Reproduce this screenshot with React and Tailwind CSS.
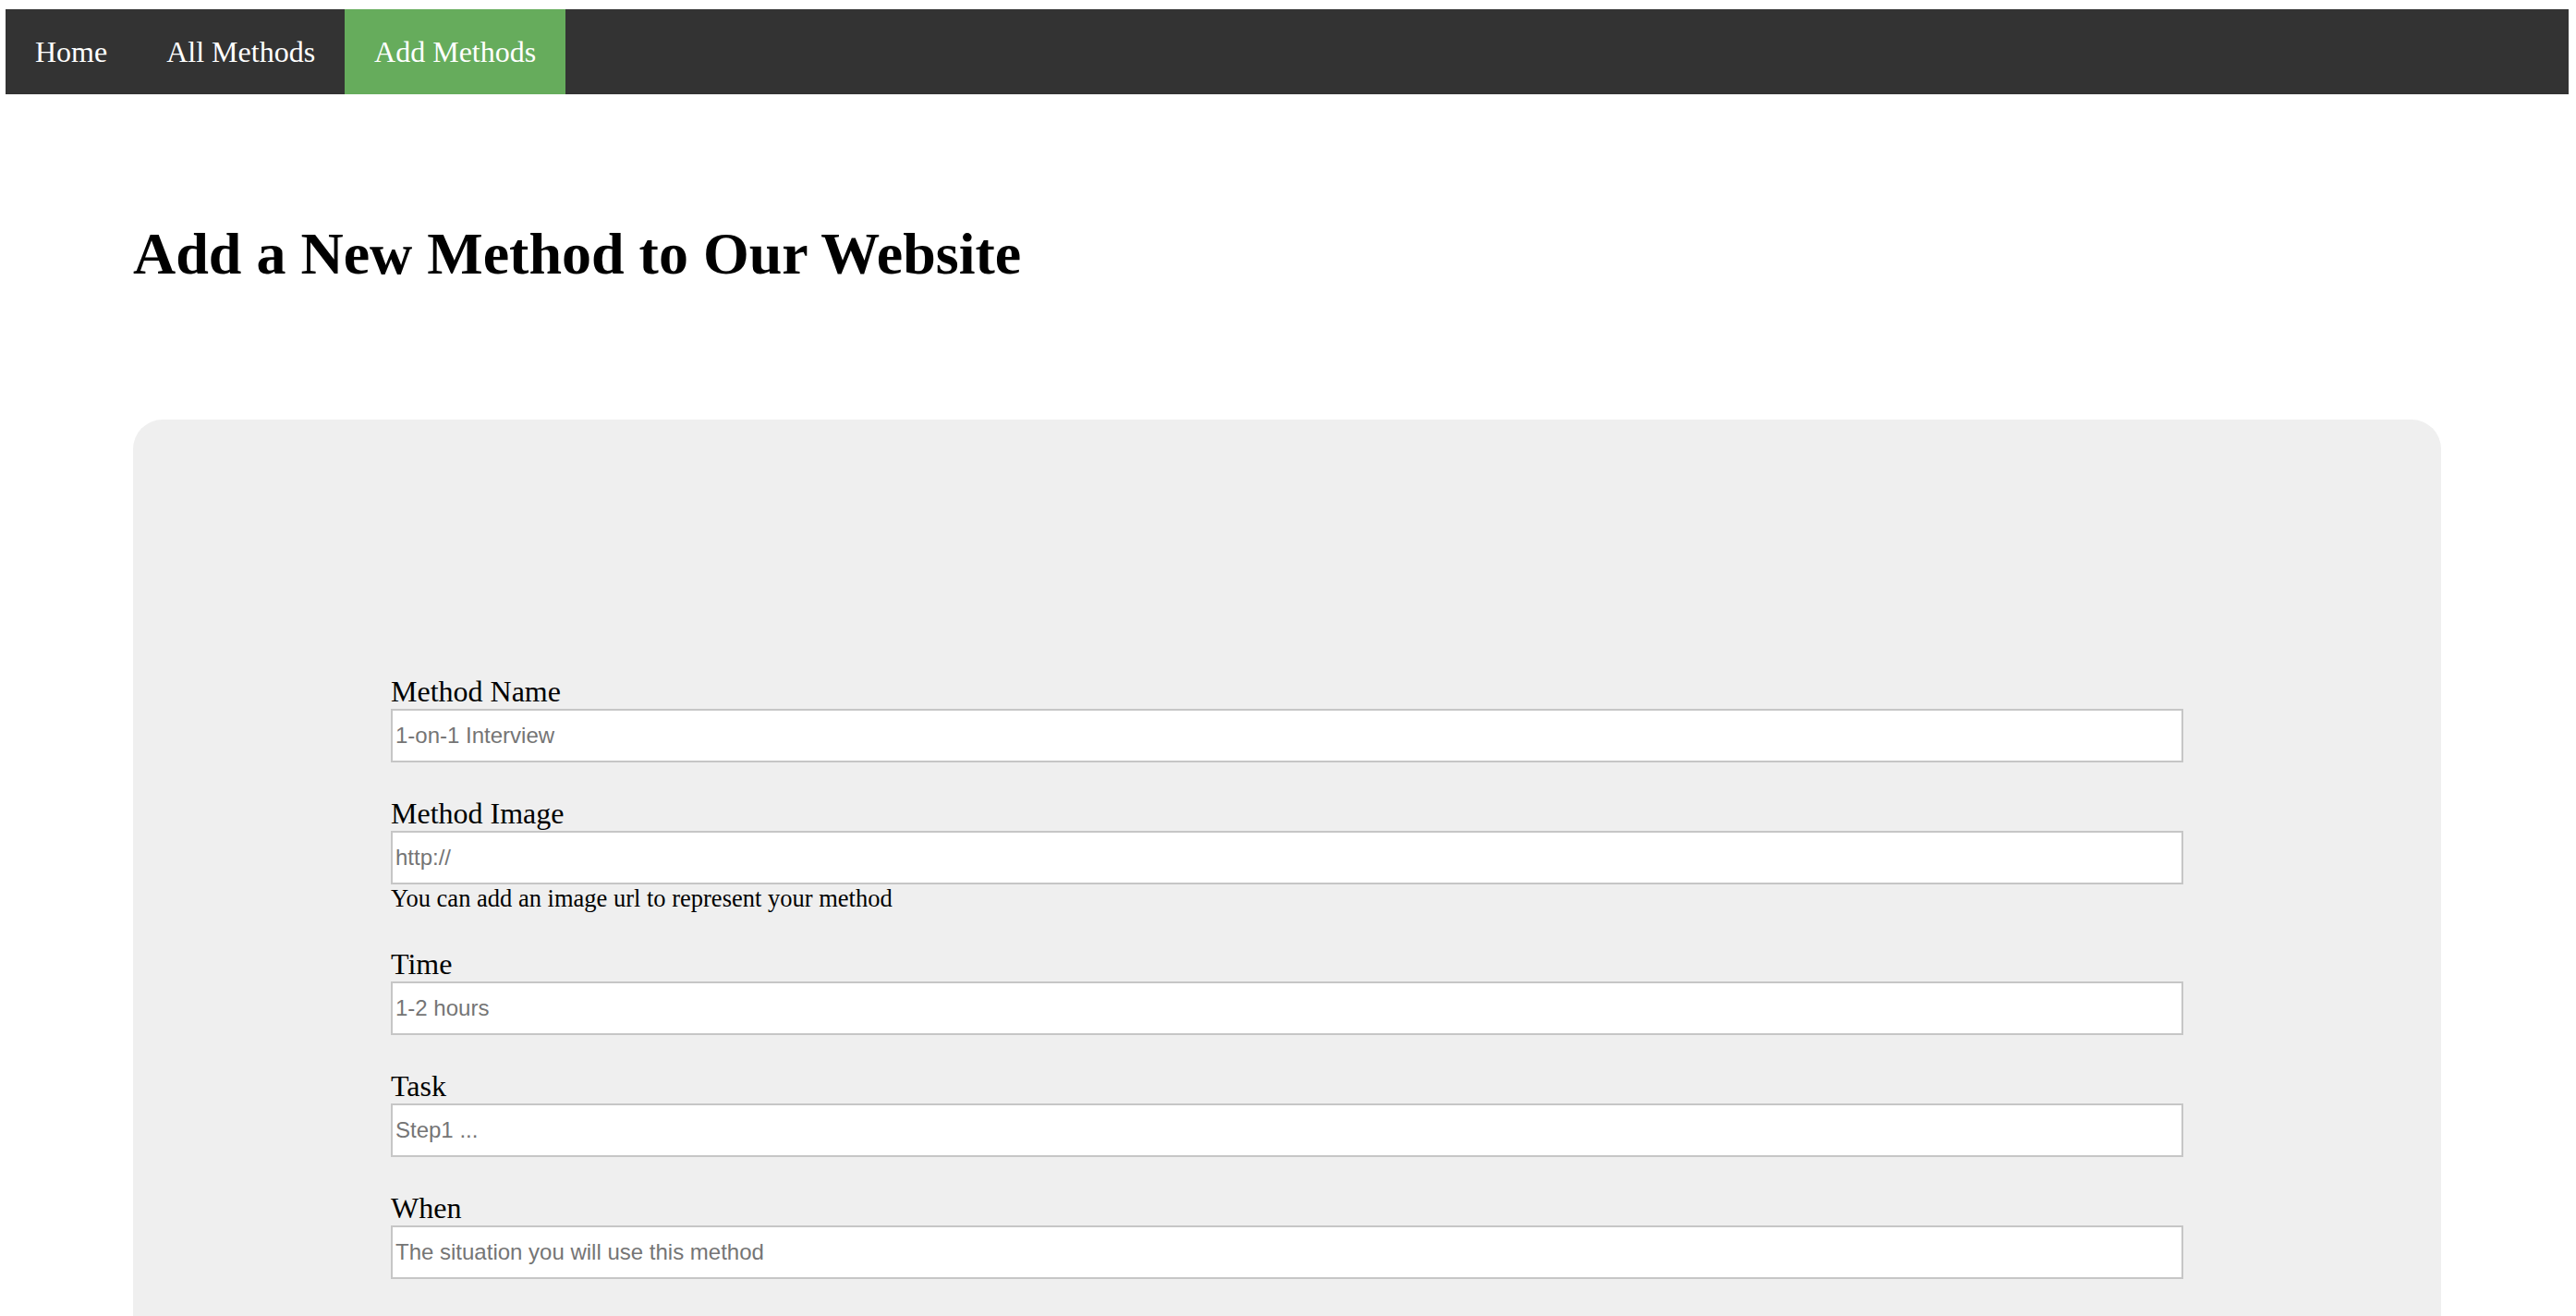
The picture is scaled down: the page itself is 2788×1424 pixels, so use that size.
import React from 'react';

const serif = "font-['Liberation_Serif','Times_New_Roman',serif]";
const sans = "font-['Liberation_Sans',Arial,sans-serif]";

const NavLink = ({ children, active = false }) => (
  <a
    href="#"
    className={`flex items-center px-[32px] text-[32px] leading-[37px] text-white ${
      active ? 'bg-[#66ac5c]' : ''
    }`}
  >
    {children}
  </a>
);

const Field = ({ label, placeholder, hint }) => (
  <div className="mb-[36px]">
    <label className="block text-[32px] leading-[38px] text-black">{label}</label>
    <input
      type="text"
      placeholder={placeholder}
      className={`block w-full h-[58px] bg-white border-2 border-[#c6c6c6] px-[3px] text-[24px] text-black placeholder:text-[#757575] outline-none ${sans}`}
    />
    {hint && <div className="text-[26.5px] leading-[31px] text-black">{hint}</div>}
  </div>
);

export default function App() {
  return (
    <div className={`min-h-screen bg-white ${serif}`}>
      <nav className="mt-[10px] ml-[6px] mr-[8px] h-[92px] flex bg-[#333333]">
        <NavLink>Home</NavLink>
        <NavLink>All Methods</NavLink>
        <NavLink active>Add Methods</NavLink>
      </nav>

      <div className="mx-[144px] pr-[2px]">
        <h1 className="mt-[136px] text-[64px] leading-[74px] font-bold text-black">
          Add a New Method to Our Website
        </h1>

        <div className="mt-[142px] rounded-[32px] bg-[#efefef] px-[279px] pt-[275px] pb-[200px]">
          <form>
            <Field label="Method Name" placeholder="1-on-1 Interview" />
            <Field
              label="Method Image"
              placeholder="http://"
              hint="You can add an image url to represent your method"
            />
            <Field label="Time" placeholder="1-2 hours" />
            <Field label="Task" placeholder="Step1 ..." />
            <Field label="When" placeholder="The situation you will use this method" />
          </form>
        </div>
      </div>
    </div>
  );
}
